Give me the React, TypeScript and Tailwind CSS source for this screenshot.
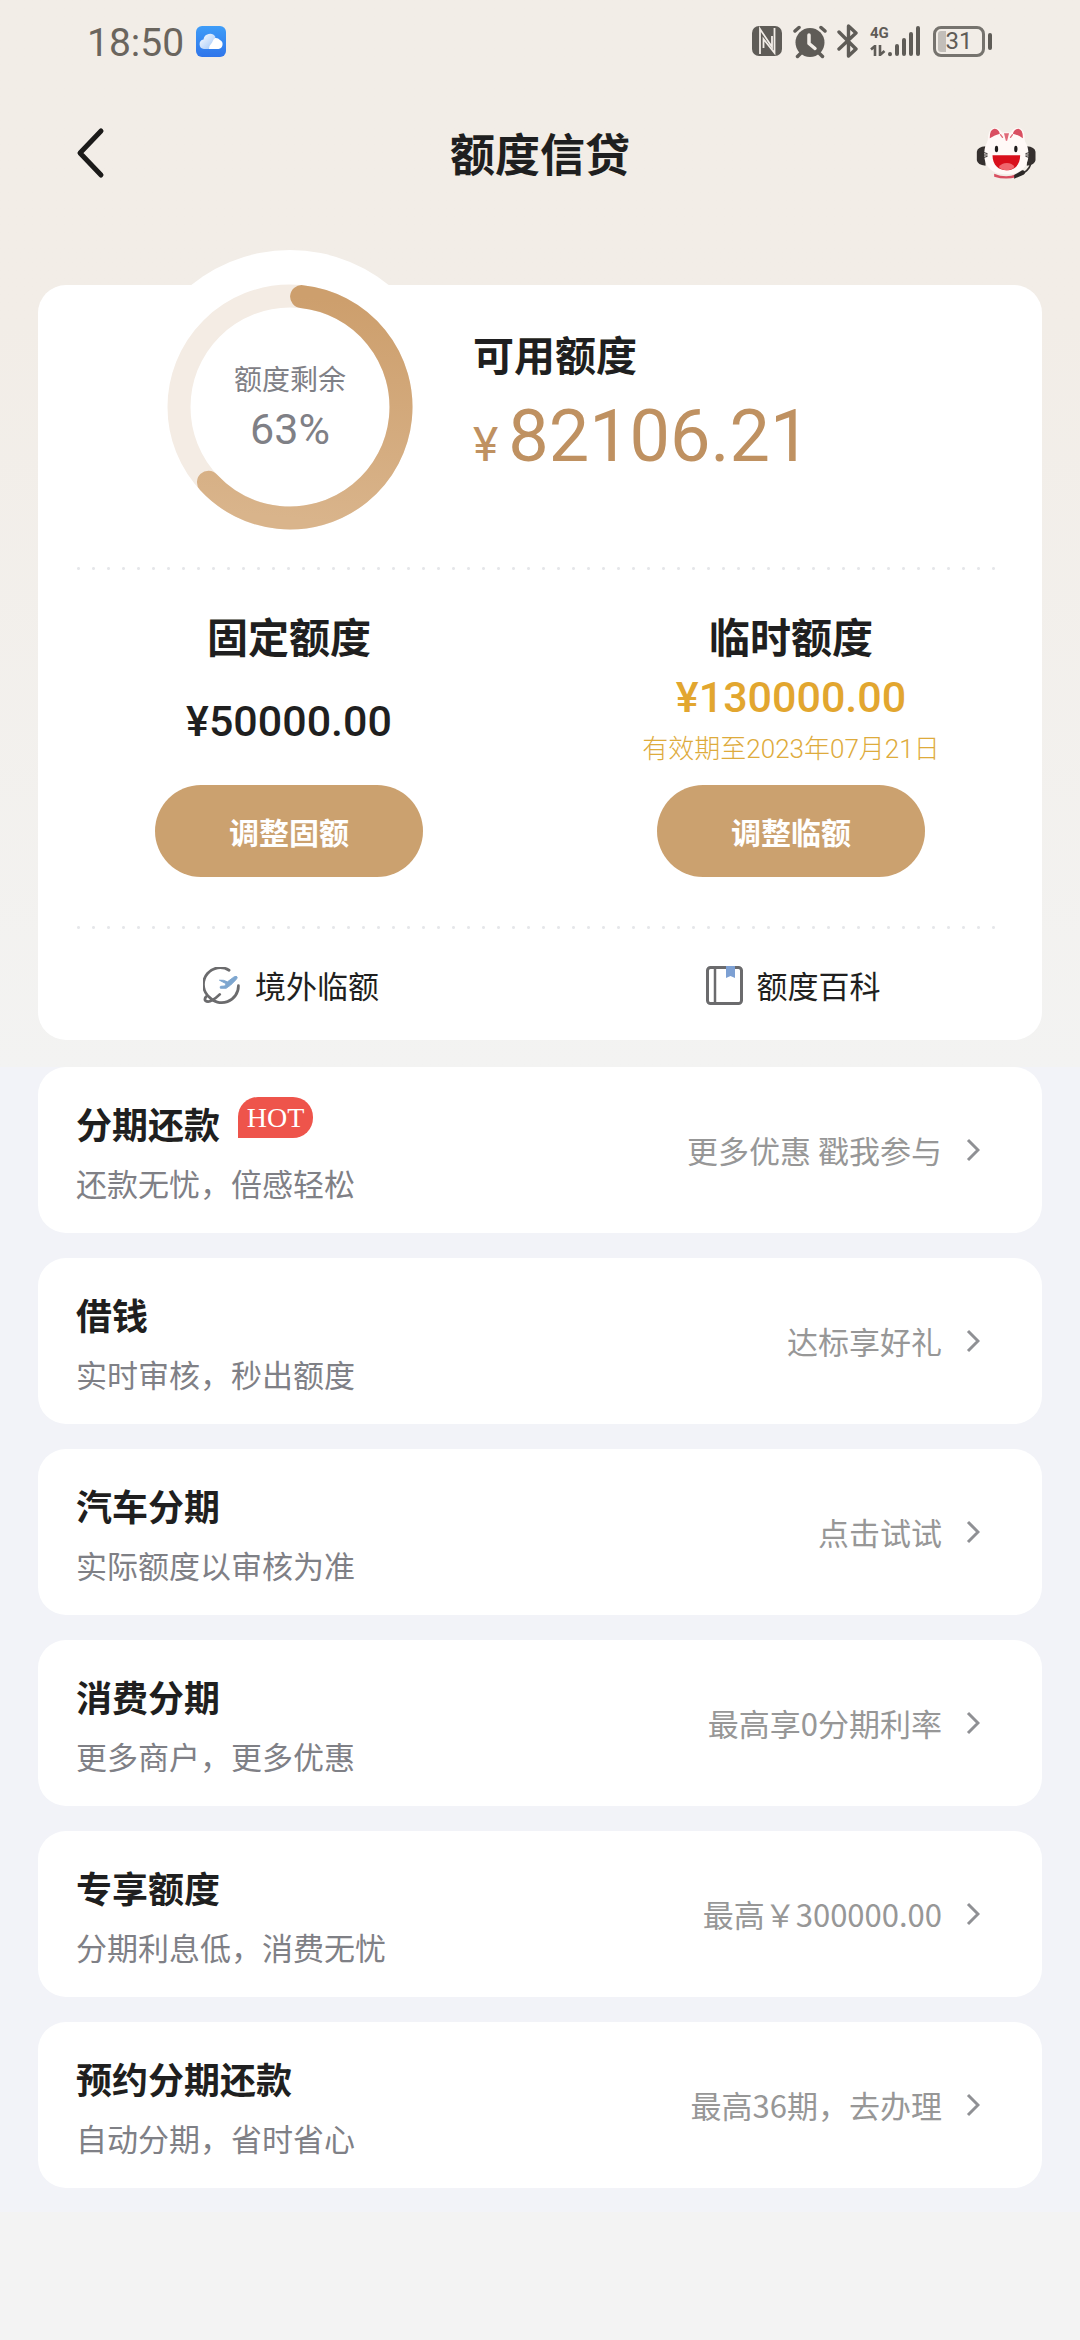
import React from "react";

type Product = {
  title: string;
  note: string;
  action: string;
  hot?: boolean;
};

const products: Product[] = [
  { title: "分期还款", note: "还款无忧，倍感轻松", action: "更多优惠 戳我参与", hot: true },
  { title: "借钱", note: "实时审核，秒出额度", action: "达标享好礼" },
  { title: "汽车分期", note: "实际额度以审核为准", action: "点击试试" },
  { title: "消费分期", note: "更多商户，更多优惠", action: "最高享0分期利率" },
  { title: "专享额度", note: "分期利息低，消费无忧", action: "最高￥300000.00" },
  { title: "预约分期还款", note: "自动分期，省时省心", action: "最高36期，去办理" },
];

function CloudIcon() {
  return (
    <svg width="30" height="31" viewBox="0 0 30 31" aria-hidden="true">
      <defs>
        <linearGradient id="cloudBg" x1="0" y1="0" x2="0" y2="1">
          <stop offset="0" stopColor="#3f9df8" />
          <stop offset="1" stopColor="#2f75ea" />
        </linearGradient>
        <linearGradient id="cloudLeft" x1="0" y1="0" x2="1" y2="1">
          <stop offset="0" stopColor="#ffffff" />
          <stop offset="1" stopColor="#9cc4f8" />
        </linearGradient>
      </defs>
      <rect width="30" height="31" rx="6" fill="url(#cloudBg)" />
      <path d="M8 23a4.8 4.8 0 0 1-.5-9.500A6.500 6.500 0 0 1 19.500 11L14 23Z" fill="url(#cloudLeft)" />
      <path d="M13 23a6 6 0 0 1 2-5c1.500-1.500 2-4.500 4-6a5.500 5.500 0 0 1 5 2A4.800 4.800 0 0 1 22.500 23Z" fill="#ffffff" />
    </svg>
  );
}

function StatusIcons() {
  return (
    <div className="flex items-center text-[#5f5c57]">
      <svg width="30" height="36" viewBox="0 0 30 36" aria-hidden="true">
        <rect x="0" y="3" width="30" height="30" rx="7" fill="currentColor" />
        <path d="M8 31V6l12 18V13" fill="none" stroke="#f2ede7" strokeWidth="1.800" />
        <path d="M11.500 25v-9L22.500 30V5" fill="none" stroke="#f2ede7" strokeWidth="1.800" />
      </svg>
      <svg className="ml-[11px]" width="34" height="36" viewBox="0 0 34 36" aria-hidden="true">
        <circle cx="17" cy="19.500" r="14.500" fill="currentColor" />
        <path d="M2 8 6 4.500M32 8 28 4.500M4.500 33.500l4-4M29.500 33.500l-4-4" stroke="currentColor" strokeWidth="3.500" strokeLinecap="round" />
        <path d="M16 12v8.500l6 5" fill="none" stroke="#f2ede7" strokeWidth="3.500" strokeLinecap="round" strokeLinejoin="round" />
      </svg>
      <svg className="ml-[10px]" width="22" height="36" viewBox="0 0 22 36" aria-hidden="true">
        <path d="M2 9l17 17-7.500 7V3L19 10 2 26" fill="none" stroke="currentColor" strokeWidth="3.400" strokeLinecap="round" strokeLinejoin="round" />
      </svg>
      <div className="ml-[11px] flex h-9 w-[18px] flex-col justify-between pt-[2px] pb-[3px]">
        <span className="font-['Roboto',sans-serif] text-[15px] leading-4 font-bold">4G</span>
        <svg width="16" height="11" viewBox="0 0 16 11" aria-hidden="true">
          <path d="M1 4.500 5 1v10M10 0v10l4.500-4" fill="none" stroke="currentColor" strokeWidth="2.600" />
        </svg>
      </div>
      <svg width="33" height="36" viewBox="0 0 33 36" aria-hidden="true">
        <path d="M2 31v0.200M9 23v8M16 17v14M23 11v20M30 5v26" stroke="currentColor" strokeWidth="4" strokeLinecap="round" />
      </svg>
      <div className="ml-[12px] h-[31px] w-[52px] rounded-lg border-[3px] border-[#76736e] p-[2px]">
        <div className="flex h-full items-center justify-center rounded-[3px] bg-linear-to-r from-[#c2beb9] from-20% to-transparent to-20% font-['Roboto',sans-serif] text-2xl leading-none">
          31
        </div>
      </div>
      <div className="ml-[3px] h-[17px] w-1 rounded-full bg-[#5f5c57]" />
    </div>
  );
}

function MascotIcon() {
  return (
    <svg width="62" height="55" viewBox="45 75 185 165" aria-hidden="true">
      <path d="M76 136q-24 2-26 16v26q2 14 26 16zM200 136q24 2 26 16v26q-2 14-26 16z" fill="#35302f" />
      <path d="M82 122q2-40 20-42 18 1 26 18zM194 122q0-40-18-42-18 1-26 18z" fill="#fff8f6" />
      <path d="M138 94c42 0 66 26 67 64 0 42-26 62-66 62s-67-20-67-62c1-38 24-64 66-64Z" fill="#fff9f7" />
      <path d="M89 112q-1-26 13-29 13 0 17 15-15 3-30 14zM188 112q1-26-13-29-13 0-17 15 15 3 30 14z" fill="#d94f61" />
      <path d="M134 99h10l-5 20zM121 101l6 8M157 101l-6 8" fill="#e06b79" stroke="#e06b79" strokeWidth="4" strokeLinecap="round" />
      <ellipse cx="109" cy="144" rx="5" ry="10" fill="#1f1b1b" />
      <ellipse cx="167" cy="144" rx="5" ry="10" fill="#1f1b1b" />
      <path d="M97 163h83c0 30-18 45-41 45s-42-15-42-45Z" fill="#d90f1b" />
      <path d="M116 198q8-12 24-12t23 12q-10 10-24 10t-23-10Z" fill="#f0666d" />
      <path d="M102 218q34 14 66 2v9q-34 8-66-2Z" fill="#d94f61" />
      <path d="M62 152l20 6M62 162h20M62 172l20-6M216 152l-20 6M216 162h-20M216 172l-20-6" stroke="#35302f" strokeWidth="3" />
      <path d="M212 188q-6 22-34 34" fill="none" stroke="#35302f" strokeWidth="5" />
      <path d="M162 222l24-14q6-2 8 4t-4 9l-28 12z" fill="#2c2827" />
    </svg>
  );
}

function PlaneGlobeIcon() {
  return (
    <svg width="38" height="38" viewBox="20 18 118 118" aria-hidden="true">
      <g fill="none" stroke="#6b6b6d" strokeWidth="8.500" strokeLinecap="round">
        <path d="M101 28A52 52 0 0 0 34 106q-11 9-7 16 8 8 22-1 12-7 23-18" />
        <path d="M38 110a52 52 0 0 0 92-34" />
      </g>
      <path d="M71 59q12-2 25 5l20-15q8-4 10 0 1 4-5 10L106 74 92 84H74q-2-6 1-6l13-1 4-7z" fill="#7da6cf" stroke="#7da6cf" strokeWidth="3" strokeLinejoin="round" />
    </svg>
  );
}

function BookIcon() {
  return (
    <svg width="37" height="39" viewBox="0 0 37 39" aria-hidden="true">
      <rect x="1.500" y="1.500" width="34" height="36" rx="3" fill="none" stroke="#6b6b6d" strokeWidth="3" />
      <path d="M9 2v35" stroke="#6b6b6d" strokeWidth="2.500" />
      <path d="M20 0h9v12l-4.500-2-4.500 2z" fill="#7da0d3" />
    </svg>
  );
}

function QuotaRing({ percent }: { percent: number }) {
  const radius = 111;
  const length = 2 * Math.PI * radius;
  const capInset = radius * 0.1;
  return (
    <div className="relative -mt-[35px] flex size-[314px] shrink-0 items-center justify-center rounded-full bg-white">
      <svg width="246" height="246" viewBox="0 0 246 246" aria-hidden="true">
        <defs>
          <linearGradient id="ringFill" x1="1" y1="0" x2="0" y2="0">
            <stop offset="0" stopColor="#cd9f6d" />
            <stop offset="1" stopColor="#d9b48b" />
          </linearGradient>
        </defs>
        <circle cx="123" cy="123" r={radius} fill="none" stroke="#f4ece4" strokeWidth="23" />
        <circle
          cx="123"
          cy="123"
          r={radius}
          fill="none"
          stroke="url(#ringFill)"
          strokeWidth="23"
          strokeLinecap="round"
          strokeDasharray={`${(length * percent) / 100 - capInset} ${length}`}
          transform="rotate(-84 123 123)"
        />
      </svg>
      <div className="absolute inset-0 flex flex-col items-center justify-center pb-[2px] text-[#7f8086]">
        <span className="text-[28px] leading-10">额度剩余</span>
        <span className="mt-[6px] font-['Roboto',sans-serif] text-[43px] leading-[50px]">{percent}%</span>
      </div>
    </div>
  );
}

function DottedLine() {
  return (
    <div className="mr-[42px] ml-[33px] h-[3px] bg-[radial-gradient(circle,#e6e7ea_1px,transparent_2px)] bg-[length:15px_3px]" />
  );
}

function PillButton({ children }: { children: React.ReactNode }) {
  return (
    <button type="button" className="h-[92px] w-[268px] rounded-full bg-[#cba16f] text-[30px] font-bold text-white">
      {children}
    </button>
  );
}

function ProductCard({ title, note, action, hot }: Product) {
  return (
    <li>
      <a href="#" className="flex h-[166px] items-center justify-between rounded-[28px] bg-white pr-[62px] pl-[38px]">
        <div className="pt-[5px]">
          <div className="flex items-center">
            <h2 className="text-4xl leading-[52px] font-bold">{title}</h2>
            {hot && (
              <span className="mb-[10px] ml-[18px] flex h-[41px] w-[75px] items-center justify-center rounded-[20px] rounded-bl-none bg-[#ee544b] font-['Liberation_Serif',serif] text-[28px] leading-none text-white">
                HOT
              </span>
            )}
          </div>
          <p className="mt-2 text-[31px] leading-[52px] text-[#7f8086]">{note}</p>
        </div>
        <div className="flex items-center gap-6 text-[31px] text-[#979797]">
          <span>{action}</span>
          <svg width="14" height="24" viewBox="0 0 14 24" aria-hidden="true">
            <path d="M2 2l10 10L2 22" fill="none" stroke="#8f9094" strokeWidth="3" />
          </svg>
        </div>
      </a>
    </li>
  );
}

export default function App() {
  return (
    <div className="min-h-screen bg-[#f3f3f3] font-['Noto_Sans_CJK_SC',sans-serif] text-[#1f1f20]">
      <div className="bg-[#f2f3f8] pb-6">
        <div className="bg-linear-to-b from-[#f2ede7] from-30% to-[#f3f3f2] pb-[27px]">
          <div className="flex h-[82px] items-center justify-between pr-[88px] pl-[87px]">
            <div className="flex items-center gap-3">
              <span className="pt-1 font-['Roboto',sans-serif] text-[39px] leading-none text-[#6a655e]">18:50</span>
              <CloudIcon />
            </div>
            <StatusIcons />
          </div>

          <header className="grid h-[142px] grid-cols-[1fr_auto_1fr] items-center px-[43px]">
            <button type="button" aria-label="返回" className="justify-self-start pl-[32px]">
              <svg width="30" height="52" viewBox="0 0 30 52" aria-hidden="true">
                <path d="M26 4 5 26l21 22" fill="none" stroke="#1b1a19" strokeWidth="5" strokeLinecap="round" strokeLinejoin="round" />
              </svg>
            </button>
            <h1 className="text-[45px] leading-[60px] font-bold">额度信贷</h1>
            <button type="button" aria-label="客服" className="justify-self-end">
              <MascotIcon />
            </button>
          </header>

          <main className="mx-[38px] mt-[61px] rounded-[28px] bg-white">
            <section className="flex h-[282px] items-start pl-[95px]">
              <QuotaRing percent={63} />
              <div className="pt-[40px] pl-[26px]">
                <h2 className="text-[41px] leading-[56px] font-bold">可用额度</h2>
                <p className="mt-4 flex items-baseline gap-[10px] font-['Roboto',sans-serif] leading-[80px] text-[#bf9161]">
                  <span className="text-[48px]">¥</span>
                  <span className="text-[72px]">82106.21</span>
                </p>
              </div>
            </section>

            <DottedLine />

            <section className="grid grid-cols-2 pb-[49px]">
              <div className="flex flex-col items-center pt-[37px]">
                <h2 className="text-[41px] leading-[56px] font-bold">固定额度</h2>
                <p className="mt-7 mb-[34px] font-['Roboto',sans-serif] text-[43px] leading-[60px] font-medium">¥50000.00</p>
                <PillButton>调整固额</PillButton>
              </div>
              <div className="flex flex-col items-center pt-[37px]">
                <h2 className="text-[41px] leading-[56px] font-bold">临时额度</h2>
                <p className="mt-1 font-['Roboto',sans-serif] text-[43px] leading-[60px] font-medium text-[#e2a62f]">¥130000.00</p>
                <p className="mt-[2px] mb-4 font-['Roboto','Noto_Sans_CJK_SC',sans-serif] text-[26px] leading-[40px] font-light text-[#deab3c]">
                  有效期至2023年07月21日
                </p>
                <PillButton>调整临额</PillButton>
              </div>
            </section>

            <DottedLine />

            <nav className="grid h-[111px] grid-cols-2 pt-[2px] text-[31px]">
              <a href="#" className="flex items-center justify-center gap-[14px] pl-1">
                <PlaneGlobeIcon />
                境外临额
              </a>
              <a href="#" className="flex items-center justify-center gap-[14px] pl-1">
                <BookIcon />
                额度百科
              </a>
            </nav>
          </main>
        </div>

        <ul className="flex flex-col gap-[25px] px-[38px]">
          {products.map((product) => (
            <ProductCard key={product.title} {...product} />
          ))}
        </ul>
      </div>
    </div>
  );
}
